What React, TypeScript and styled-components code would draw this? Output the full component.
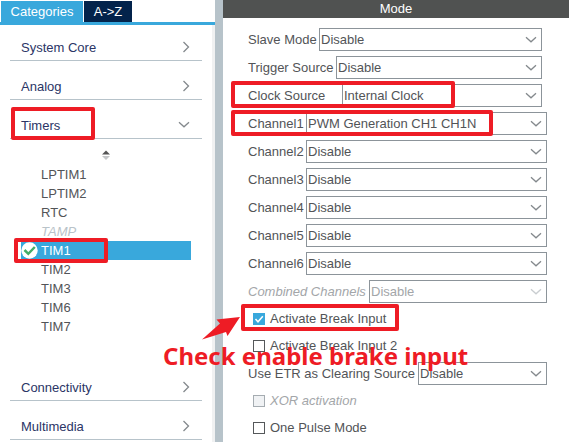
import React, { useState } from "react";
import styled, { createGlobalStyle, css } from "styled-components";

const color = {
  accent: "#39a8dc",
  navy: "#03234b",
  heading: "#2b3566",
  text: "#525457",
  muted: "#a3a6a9",
  line: "#b7c3ca",
  border: "#8c949a",
  header: "#505251",
  mark: "#ee1c25",
};

const GlobalStyle = createGlobalStyle`
  * { box-sizing: border-box; }
  body {
    margin: 0;
    background: #fff;
    color: ${color.text};
    font: 13px/18px "Liberation Sans", Arial, sans-serif;
  }
  button, select, input { font: inherit; color: inherit; margin: 0; }
`;

const Page = styled.div`
  display: grid;
  grid-template-columns: 215px 8px minmax(0, 1fr);
  height: 100vh;
  min-height: 442px;
  overflow: hidden;
`;

const Sidebar = styled.aside`
  display: flex;
  flex-direction: column;
  min-width: 0;
`;

const Divider = styled.div`
  background: ${color.line};
`;

const Tabs = styled.div`
  display: flex;
  gap: 1px;
  padding: 1px 1px 0;
  border-bottom: 3px solid ${color.accent};
`;

const Tab = styled.button<{ $active: boolean; $width: number }>`
  width: ${(p) => p.$width}px;
  height: 21px;
  padding: 0;
  border: 0;
  background: ${(p) => (p.$active ? color.accent : color.navy)};
  color: #fff;
`;

const Sections = styled.nav`
  display: flex;
  flex: 1;
  flex-direction: column;
  gap: 12px;
  padding: 9px 10px 0;
  border-right: 3px solid #f0f1f2;
`;

const SectionHeader = styled.button`
  position: relative;
  display: flex;
  align-items: center;
  justify-content: space-between;
  width: 100%;
  height: 27px;
  padding: 2px 12px 0 11px;
  border: 0;
  border-bottom: 1px solid ${color.line};
  background: none;
  color: ${color.heading};
  text-align: left;

  svg { margin-bottom: 2px; }
`;

const SectionBody = styled.div`
  display: flex;
  flex-direction: column;
  align-items: center;
  gap: 4px;
  padding: 10px 11px 26px;
`;

const SortButton = styled.button`
  display: flex;
  height: 12px;
  padding: 0;
  border: 0;
  background: none;
`;

const List = styled.ul`
  width: 100%;
  margin: 0;
  padding: 0;
  list-style: none;
`;

const Item = styled.li`
  position: relative;
`;

const ItemButton = styled.button<{ $selected: boolean }>`
  display: grid;
  grid-template-columns: 20px 1fr;
  align-items: center;
  width: 100%;
  height: 19px;
  padding: 0;
  border: 0;
  text-align: left;
  background: ${(p) => (p.$selected ? color.accent : "none")};
  ${(p) => p.$selected && "color: #fff;"}

  &:disabled { color: #b9c3c9; font-style: italic; }
  span { grid-column: 2; grid-row: 1; }
  svg { grid-column: 1; grid-row: 1; }
`;

const Mode = styled.main`
  position: relative;
  min-width: 0;
`;

const ModeTitle = styled.h1`
  height: 18px;
  margin: 0;
  background: ${color.header};
  color: #fff;
  font-size: 13px;
  font-weight: 400;
  line-height: 17px;
  text-align: center;
`;

const Form = styled.form`
  display: flex;
  flex-direction: column;
  gap: 5px;
  padding: 10px 22px 0 25px;
`;

const Field = styled.div<{ $inset?: boolean }>`
  position: relative;
  display: flex;
  align-items: center;
  height: 23px;
  ${(p) => p.$inset && "margin-right: 5px;"}
`;

const FieldLabel = styled.label<{ $width: number; $disabled?: boolean }>`
  flex: none;
  width: ${(p) => p.$width}px;
  white-space: nowrap;
  ${(p) => p.$disabled && css`color: ${color.muted}; font-style: italic;`}
`;

const SelectBox = styled.div`
  position: relative;
  flex: 1;
  min-width: 0;
  height: 23px;

  svg { position: absolute; top: 8px; right: 5px; pointer-events: none; }
`;

const Select = styled.select`
  display: block;
  width: 100%;
  height: 100%;
  padding: 0 20px 0 1px;
  border: 1px solid ${color.border};
  border-radius: 0;
  background: #fff;
  appearance: none;

  &:disabled { color: ${color.muted}; opacity: 1; }
`;

const CheckGroup = styled.div`
  display: flex;
  flex-direction: column;
  gap: 9px;
  padding: 2px 0;
`;

const CheckRow = styled.div`
  position: relative;
  display: flex;
  height: 18px;
`;

const CheckLabel = styled.label<{ $disabled?: boolean }>`
  display: flex;
  align-items: center;
  gap: 5px;
  padding-left: 5px;
  ${(p) => p.$disabled && css`color: ${color.muted}; font-style: italic;`}
`;

const CheckBox = styled.span`
  display: grid;
  width: 12px;
  height: 12px;

  input, svg { grid-area: 1 / 1; }
  svg { pointer-events: none; }
  input:not(:checked) + svg { visibility: hidden; }
`;

const CheckInput = styled.input`
  width: 12px;
  height: 12px;
  border: 1px solid #55585a;
  background: #fff;
  appearance: none;

  &:checked { border-color: ${color.accent}; background: ${color.accent}; }
  &:disabled { border-color: #a5acb1; background: #f0f2f4; }
`;

const Highlight = styled.span<{ $top: number; $left: number; $width: number; $height: number }>`
  position: absolute;
  z-index: 1;
  top: ${(p) => p.$top}px;
  left: ${(p) => p.$left}px;
  width: ${(p) => p.$width}px;
  height: ${(p) => p.$height}px;
  border: 4px solid ${color.mark};
  border-radius: 2px;
  pointer-events: none;
`;

const Callout = styled.div`
  position: absolute;
  z-index: 2;
  top: 7px;
  left: -85px;
  color: ${color.mark};
  font: 700 24px/30px "Noto Sans", "Open Sans", sans-serif;
  white-space: nowrap;
  pointer-events: none;

  svg { display: block; margin-left: 39px; }
`;

const Chevron = ({ dir = "down", stroke = "#84898d" }: { dir?: "down" | "right"; stroke?: string }) =>
  dir === "down" ? (
    <svg width="12" height="8" viewBox="0 0 12 8" fill="none" stroke={stroke} strokeWidth="1.3">
      <path d="M1 1.2 6 5.8 11 1.2" />
    </svg>
  ) : (
    <svg width="8" height="12" viewBox="0 0 8 12" fill="none" stroke={stroke} strokeWidth="1.3">
      <path d="M1.5 1 6.5 6 1.5 11" />
    </svg>
  );

const SelectedMark = () => (
  <svg width="17" height="17" viewBox="0 0 17 17">
    <circle cx="8.5" cy="8.5" r="8.2" fill="#fff" />
    <path d="M3.5 8 7.3 11.8 13.8 5" fill="none" stroke="#43ad68" strokeWidth="2.5" />
  </svg>
);

const timers = ["LPTIM1", "LPTIM2", "RTC", "TAMP", "TIM1", "TIM2", "TIM3", "TIM6", "TIM7"];

function Section({ name, open, children }: { name: string; open?: boolean; children?: React.ReactNode }) {
  return (
    <SectionHeader type="button" aria-expanded={!!open}>
      {name}
      {open ? <Chevron /> : <Chevron dir="right" />}
      {children}
    </SectionHeader>
  );
}

interface DropdownProps {
  id: string;
  label: string;
  labelWidth: number;
  value?: string;
  inset?: boolean;
  disabled?: boolean;
  children?: React.ReactNode;
}

function Dropdown({ id, label, labelWidth, value = "Disable", inset, disabled, children }: DropdownProps) {
  return (
    <Field $inset={inset}>
      <FieldLabel htmlFor={id} $width={labelWidth} $disabled={disabled}>{label}</FieldLabel>
      <SelectBox>
        <Select id={id} disabled={disabled} defaultValue={value}>
          <option>{value}</option>
        </Select>
        <Chevron stroke={disabled ? "#c9cdd0" : undefined} />
      </SelectBox>
      {children}
    </Field>
  );
}

interface CheckProps {
  label: string;
  checked?: boolean;
  disabled?: boolean;
  children?: React.ReactNode;
}

function Check({ label, checked, disabled, children }: CheckProps) {
  return (
    <CheckRow>
      <CheckLabel $disabled={disabled}>
        <CheckBox>
          <CheckInput type="checkbox" defaultChecked={checked} disabled={disabled} />
          <svg width="12" height="12" viewBox="0 0 12 12" fill="none" stroke="#fff" strokeWidth="1.5">
            <path d="M2.5 6 5 8.8 9.8 3.2" />
          </svg>
        </CheckBox>
        {label}
      </CheckLabel>
      {children}
    </CheckRow>
  );
}

export default function App() {
  const [selected, setSelected] = useState("TIM1");
  return (
    <>
      <GlobalStyle />
      <Page>
        <Sidebar>
          <Tabs>
            <Tab type="button" $active $width={82}>Categories</Tab>
            <Tab type="button" $active={false} $width={48}>{"A->Z"}</Tab>
          </Tabs>
          <Sections>
            <Section name="System Core" />
            <Section name="Analog" />
            <div>
              <Section name="Timers" open>
                <Highlight $top={-5} $left={1} $width={84} $height={33} />
              </Section>
              <SectionBody>
                <SortButton type="button" aria-label="Sort">
                  <svg width="10" height="12" viewBox="0 0 10 12">
                    <path d="M1 5.5 5 1.5 9 5.5Z" fill="#555" />
                    <path d="M1 7 5 11 9 7Z" fill="#c4c6c8" />
                  </svg>
                </SortButton>
                <List>
                  {timers.map((name) => (
                    <Item key={name}>
                      <ItemButton
                        type="button"
                        $selected={name === selected}
                        disabled={name === "TAMP"}
                        onClick={() => setSelected(name)}
                      >
                        {name === selected && <SelectedMark />}
                        <span>{name}</span>
                      </ItemButton>
                      {name === "TIM1" && <Highlight $top={-3} $left={-7} $width={94} $height={25} />}
                    </Item>
                  ))}
                </List>
              </SectionBody>
            </div>
            <Section name="Connectivity" />
            <Section name="Multimedia" />
          </Sections>
        </Sidebar>
        <Divider />
        <Mode>
          <ModeTitle>Mode</ModeTitle>
          <Form>
            <Dropdown id="slave" label="Slave Mode" labelWidth={71} inset />
            <Dropdown id="trigger" label="Trigger Source" labelWidth={88} inset />
            <Dropdown id="clock" label="Clock Source" labelWidth={94} value="Internal Clock" inset>
              <Highlight $top={-3} $left={-17} $width={224} $height={27} />
            </Dropdown>
            <Dropdown id="ch1" label="Channel1" labelWidth={58} value="PWM Generation CH1 CH1N">
              <Highlight $top={-2} $left={-17} $width={262} $height={26} />
            </Dropdown>
            {[2, 3, 4, 5, 6].map((n) => (
              <Dropdown key={n} id={`ch${n}`} label={`Channel${n}`} labelWidth={58} />
            ))}
            <Dropdown id="combined" label="Combined Channels" labelWidth={121} disabled />
            <CheckGroup>
              <Check label="Activate Break Input" checked>
                <Highlight $top={-6} $left={-7} $width={158} $height={27} />
                <Callout>
                  <svg width="42" height="24" viewBox="0 0 42 24" fill={color.mark}>
                    <path d="M0 22.5 18 6.5 14.5 2.5 38 0 25.5 19 24 15Z" />
                  </svg>
                  Check enable brake input
                </Callout>
              </Check>
              <Check label="Activate Break Input 2" />
            </CheckGroup>
            <Dropdown id="etr" label="Use ETR as Clearing Source" labelWidth={170} />
            <CheckGroup>
              <Check label="XOR activation" disabled />
              <Check label="One Pulse Mode" />
            </CheckGroup>
          </Form>
        </Mode>
      </Page>
    </>
  );
}
